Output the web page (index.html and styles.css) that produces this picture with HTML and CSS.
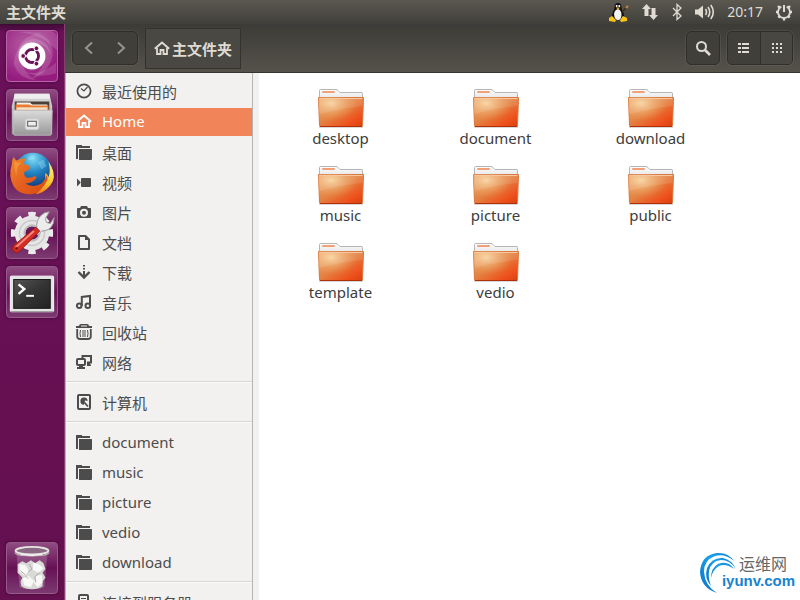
FILE: index.html
```html
<!DOCTYPE html>
<html lang="zh-CN">
<head>
    <meta charset="UTF-8">
    <meta name="viewport" content="width=device-width, initial-scale=1.0">
    <title>主文件夹</title>
    <link rel="stylesheet" href="styles.css">
</head>
<body>
    <!-- Shared icons -->
    <svg class="sprite" aria-hidden="true">
        <defs>
            <linearGradient id="paper" x1="0" y1="0" x2="0" y2="1">
                <stop offset="0" stop-color="#fdfdfd"/>
                <stop offset="1" stop-color="#dedede"/>
            </linearGradient>
            <linearGradient id="orange" x1="0" y1="0" x2="1" y2="1">
                <stop offset="0" stop-color="#eda66a"/>
                <stop offset="0.45" stop-color="#e38444"/>
                <stop offset="0.8" stop-color="#ee4f1b"/>
                <stop offset="1" stop-color="#d4410f"/>
            </linearGradient>
            <radialGradient id="shine" cx="0.28" cy="0.2" r="0.6">
                <stop offset="0" stop-color="#f8dba6" stop-opacity="0.9"/>
                <stop offset="1" stop-color="#f0a060" stop-opacity="0"/>
            </radialGradient>
            <linearGradient id="metal" x1="0" y1="0" x2="0" y2="1">
                <stop offset="0" stop-color="#dcdcdc"/>
                <stop offset="1" stop-color="#979797"/>
            </linearGradient>
            <linearGradient id="screen" x1="0" y1="0" x2="1" y2="1">
                <stop offset="0" stop-color="#555"/>
                <stop offset="0.5" stop-color="#343434"/>
                <stop offset="1" stop-color="#222"/>
            </linearGradient>
            <radialGradient id="globe" cx="0.5" cy="0.15" r="0.8">
                <stop offset="0" stop-color="#7fdcf5"/>
                <stop offset="0.45" stop-color="#2386c4"/>
                <stop offset="1" stop-color="#0f2f72"/>
            </radialGradient>
            <linearGradient id="fox" x1="0" y1="0" x2="1" y2="1">
                <stop offset="0" stop-color="#f08a2c"/>
                <stop offset="0.5" stop-color="#e4601e"/>
                <stop offset="1" stop-color="#d84a12"/>
            </linearGradient>
            <linearGradient id="flame" x1="0" y1="0" x2="0" y2="1">
                <stop offset="0" stop-color="#fff27a"/>
                <stop offset="0.6" stop-color="#f9c22e"/>
                <stop offset="1" stop-color="#ee7a1c"/>
            </linearGradient>
            <linearGradient id="swoosh" x1="0" y1="1" x2="1" y2="0">
                <stop offset="0" stop-color="#0a72c4"/>
                <stop offset="0.6" stop-color="#1aa0ea"/>
                <stop offset="1" stop-color="#0f84d8"/>
            </linearGradient>
        </defs>

        <symbol id="i-folder-big" viewBox="0 0 48 40">
            <path d="M2 39h44" stroke="#000" stroke-opacity="0.15" stroke-width="2"/>
            <path d="M2.500 14V2.500Q2.500 1.500 3.500 1.500H19Q20 1.500 21 2.500L23 4.500H45Q45.500 4.500 45.500 5.500V14z" fill="url(#paper)" stroke="#b5b5b5"/>
            <rect x="5" y="3" width="13" height="2" rx="1" fill="#f2a078"/>
            <path d="M1.500 9.500h45l-1 28q0 1-1 1h-41q-1 0-1-1z" fill="url(#orange)" stroke="#d9773c"/>
            <path d="M1.500 9.500h45l-1 28q0 1-1 1h-41q-1 0-1-1z" fill="url(#shine)"/>
            <path d="M2 10h44l-.3 8Q24 20 2.500 26z" fill="#fff" fill-opacity="0.1"/>
            <path d="M2.500 10.500h43" stroke="#f6c7a0"/>
            <path d="M3 38.500h42" stroke="#b02e08"/>
        </symbol>

        <symbol id="i-clock" viewBox="0 0 16 16">
            <circle cx="8" cy="8" r="6.600" fill="none" stroke="currentColor" stroke-width="1.800"/>
            <path d="M5 5.500l3 2.500 3.500-4" fill="none" stroke="currentColor" stroke-width="1.200"/>
        </symbol>
        <symbol id="i-home" viewBox="0 0 16 16">
            <path d="M.8 8.800L8 2.500l7.200 6.300" fill="none" stroke="currentColor" stroke-width="2"/>
            <path d="M3 8v6h3.500v-4h3v4H13V8" fill="none" stroke="currentColor" stroke-width="1.800"/>
        </symbol>
        <symbol id="i-folder" viewBox="0 0 16 16">
            <path d="M0 1h6v1h8v2H2v11H0z" fill="currentColor"/>
            <path d="M3 5h12.500q.5 0 .5.500V15q0 1-1 1H3z" fill="currentColor"/>
        </symbol>
        <symbol id="i-video" viewBox="0 0 16 16">
            <rect x="5" y="4" width="10" height="9" rx="1" fill="currentColor"/>
            <path d="M1 4.500L4.500 8v1L1 12.500z" fill="currentColor"/>
        </symbol>
        <symbol id="i-camera" viewBox="0 0 16 16">
            <path fill-rule="evenodd" d="M5 2h6l1 2h2q1 0 1 1v8q0 1-1 1H2q-1 0-1-1V5q0-1 1-1h2zM8 4.800a4 4 0 1 0 0 8 4 4 0 0 0 0-8zm0 2a2 2 0 1 1 0 4 2 2 0 0 1 0-4z" fill="currentColor"/>
        </symbol>
        <symbol id="i-doc" viewBox="0 0 16 16">
            <path d="M3 2h6.500L13 5.500V15H3z" fill="none" stroke="currentColor" stroke-width="2" stroke-linejoin="round"/>
            <path d="M9 1v5h5" fill="currentColor"/>
        </symbol>
        <symbol id="i-down" viewBox="0 0 16 16">
            <path d="M7 1h2v1.500H7zM7 4h2v1.500H7zM7 7h2v6H7z" fill="currentColor"/>
            <path d="M2.500 8L8 13.500 13.500 8" fill="none" stroke="currentColor" stroke-width="2.400"/>
        </symbol>
        <symbol id="i-music" viewBox="0 0 16 16">
            <circle cx="3.200" cy="11.800" r="2.300" fill="none" stroke="currentColor" stroke-width="2"/>
            <circle cx="11.800" cy="11.800" r="2.300" fill="none" stroke="currentColor" stroke-width="2"/>
            <path d="M5.800 12V3l8.200-1v10" fill="none" stroke="currentColor" stroke-width="2"/>
        </symbol>
        <symbol id="i-trash" viewBox="0 0 16 16">
            <path d="M0 2h3q0-2 2-2h6q2 0 2 2h3v2H0zM5 1.500V2.500h6V1.500z" fill="currentColor"/>
            <path d="M1.200 5v7.500q0 2.500 3 2.500h7.600q3 0 3-2.500V5" fill="none" stroke="currentColor" stroke-width="1.800"/>
            <path d="M4.500 6q-1 3.500 0 7M7 6v7M9 6v7M11.500 6q1 3.500 0 7" fill="none" stroke="currentColor"/>
        </symbol>
        <symbol id="i-network" viewBox="0 0 16 16">
            <rect x="1" y="5" width="8" height="6" rx="1" fill="none" stroke="currentColor" stroke-width="2"/>
            <path d="M3 11h4v2h2v2H1v-2h2z" fill="currentColor"/>
            <path d="M6.500 4V2H15v6.500h-4" fill="none" stroke="currentColor" stroke-width="2"/>
            <path d="M11 9h3v1.500h1V12h-4z" fill="currentColor"/>
        </symbol>
        <symbol id="i-disk" viewBox="0 0 16 16">
            <rect x="2" y="1" width="12" height="14" rx="1" fill="none" stroke="currentColor" stroke-width="2"/>
            <path d="M8 10.800A3.600 3.600 0 1 1 11.600 7L9 6.500 8 8z" fill="currentColor"/>
            <path d="M7.500 7.500l4.500 5" stroke="currentColor" stroke-width="1.800"/>
        </symbol>
        <symbol id="i-server" viewBox="0 0 16 16">
            <rect x="3" y="1" width="9" height="14" rx="1" fill="none" stroke="currentColor" stroke-width="2"/>
            <path d="M5 4.500h5M5 7.500h5" stroke="currentColor"/>
        </symbol>
    </svg>

    <header class="panel">
        <span class="panel-title">主文件夹</span>
        <div class="indicators">
            <button class="indicator" aria-label="输入法">
                <svg width="20" height="20" viewBox="0 0 20 20">
                    <path d="M9 1q3.500 0 3.500 4 0 3 2 6 1.500 4-1 7H5q-3-3-1.500-7 2-3 2-6Q5.500 1 9 1z" fill="#111"/>
                    <path d="M9 7q3 1 3.500 5 0 6-3.500 6t-4-6q.5-4 4-5z" fill="#f4f4f4"/>
                    <circle cx="7.700" cy="4" r="1" fill="#fff"/>
                    <circle cx="10.300" cy="4" r="1" fill="#fff"/>
                    <path d="M7 5.500h4L9 7.800z" fill="#f5a60a"/>
                    <path d="M0 16l3-2 4 4-1 2-6-1zM18 16l-4-2-3 4 1 2 6-1z" fill="#fcc419"/>
                    <path d="M13 10l5-5" stroke="#3a2a1a" stroke-width="1.500"/>
                    <path d="M17 6l2-2" stroke="#c78846" stroke-width="2"/>
                </svg>
            </button>
            <button class="indicator" aria-label="网络">
                <svg width="18" height="18" viewBox="0 0 18 18" fill="currentColor">
                    <path d="M5.500 1L10 6H7.500v7h-4V6H1zM12.500 17L8 12h2.500V5h4v7H17z"/>
                </svg>
            </button>
            <button class="indicator" aria-label="蓝牙">
                <svg width="12" height="18" viewBox="0 0 12 18" fill="none" stroke="currentColor" stroke-width="1.300">
                    <path d="M2 5l8 8-4 3.500v-15L10 5l-8 8"/>
                </svg>
            </button>
            <button class="indicator" aria-label="音量">
                <svg width="20" height="18" viewBox="0 0 20 18" fill="none" stroke="currentColor" stroke-width="1.600">
                    <path d="M0 6.500h3L8 2.500v13l-5-4H0z" fill="currentColor" stroke="none"/>
                    <path d="M10.500 6q2 3 0 6M13 4q3.500 5 0 10M15.800 2q5 7 0 14"/>
                </svg>
            </button>
            <time class="clock">20:17</time>
            <button class="indicator" aria-label="系统">
                <svg width="18" height="18" viewBox="0 0 18 18" fill="none" stroke="currentColor">
                    <path d="M6.300 3.600A6 6 0 1 0 11.700 3.600" stroke-width="1.800"/>
                    <path d="M9 2v7" stroke-width="2"/>
                    <path d="M9 15v2.500M1 9h2M15 9h2M3.300 14.700l1.500-1.500M14.700 14.700l-1.500-1.500M3 3l1.800 1.800M15 3l-1.800 1.800" stroke-width="2.400"/>
                </svg>
            </button>
        </div>
    </header>

    <div class="desktop">
        <nav class="launcher" aria-label="启动器">
            <button class="tile tile-dash" aria-label="搜索">
                <svg viewBox="0 0 52 52">
                    <g fill="#fff" fill-opacity="0.14">
                        <path d="M11 28Q10 8 32 2 52 10 46 31 40 46 25 50 40 38 39 26 37 10 22 14 12 18 11 28z"/>
                        <path d="M7 34Q9 12 28 8 44 10 45 25 42 14 30 13 15 16 16 35 20 46 30 51 12 50 7 34z"/>
                        <path d="M12 1Q30 3 40 10L52 20V5Q50 0 44 0zM18 42Q34 48 51 33V44Q34 50 18 42z"/>
                    </g>
                    <circle cx="26" cy="26" r="14" fill="#fff"/>
                    <circle cx="26" cy="26" r="6.800" fill="none" stroke="#6b1459" stroke-width="3"/>
                    <path d="M26 26H15M26 26l5.500-9.500M26 26l5.500 9.500" stroke="#fff" stroke-width="1.500"/>
                    <circle cx="26" cy="26" r="5" fill="#fff"/>
                    <g fill="#6b1459" stroke="#fff">
                        <circle cx="16.800" cy="26" r="2.500"/>
                        <circle cx="30.600" cy="18" r="2.500"/>
                        <circle cx="30.600" cy="34" r="2.500"/>
                    </g>
                </svg>
            </button>
            <button class="tile" aria-label="文件">
                <svg viewBox="0 0 52 52">
                    <path d="M8 4h36l3 13v29H5V17z" fill="url(#metal)"/>
                    <path d="M8 4h36l1 5H7z" fill="#eee"/>
                    <path d="M8 12h36v12H8z" fill="#4a4038"/>
                    <path d="M10 13h14l2 2h16v8H10z" fill="#f4f0e8"/>
                    <path d="M9 15h14l2 1h18v7H9z" fill="#e97a31"/>
                    <path d="M10 18h32v3H10z" fill="#f7e0c4"/>
                    <path d="M6 21h41l-1 25q0 1-1 1H8q-1 0-1-1z" fill="url(#metal)" stroke="#b9b9b9"/>
                    <rect x="19" y="30" width="14" height="11" rx="2" fill="#e4e4e4" stroke="#ccc"/>
                    <rect x="21.500" y="32.500" width="9" height="5" fill="#eee" stroke="#555"/>
                </svg>
            </button>
            <button class="tile" aria-label="Firefox">
                <svg viewBox="0 0 52 52">
                    <circle cx="27" cy="24" r="20" fill="url(#globe)"/>
                    <path d="M22 8q4-3 8-1l-3 4-5 1zM32 14l6-3 3 7-5 3z" fill="#b4eefa" fill-opacity="0.3"/>
                    <path d="M43 13Q51 24 46 34 42 44 30 47 41 37 40 25q3 2 3 5 3-7 0-17z" fill="url(#flame)"/>
                    <path d="M7 8q1 3 3 4 4-3 10-2-3 3-2 6 5 0 6 3-1 3-6 5-1 4 3 6 5 0 8-2 3 1 0 4-5 4-10 4 8 5 17 0 4-4 5-9 3 4-1 11-6 9-15 9Q13 48 7 39 1 28 5 16q0-5 2-8z" fill="url(#fox)"/>
                    <path d="M44 27q3-5 2-9 6 12-1 20-7 8-15 9 11-9 14-20z" fill="url(#flame)"/>
                    <path d="M8 13q3 2 7 1-6 5-5 14-3-8-2-15z" fill="#f9b04c" fill-opacity="0.5"/>
                </svg>
            </button>
            <button class="tile" aria-label="系统设置">
                <svg viewBox="0 0 52 52">
                    <circle cx="26" cy="26" r="19" fill="none" stroke="#ebebeb" stroke-width="6" pathLength="16" stroke-dasharray="1 1" stroke-dashoffset="0.5"/>
                    <circle cx="26" cy="26" r="12.500" fill="none" stroke="#e6e6e6" stroke-width="11"/>
                    <circle cx="26" cy="26" r="13" fill="none" stroke="#c9c9c9" stroke-width="1.500"/>
                    <circle cx="26" cy="26" r="8" fill="none" stroke="#bdbdbd" stroke-width="2"/>
                    <path d="M31 22q-1-9 4-14 4-4 9-4l-4 7 1 4 4 1 4-6q0 7-4 11-4 3-9 3l-4 4-4-3z" fill="#ececec" stroke="#999"/>
                    <path d="M30 20l4 4-21 21q-3 3-6 0t0-6z" fill="#d52d24" stroke="#9b1712"/>
                    <path d="M28 24L9 41" stroke="#f28a7d" stroke-width="2"/>
                    <circle cx="10" cy="42" r="1.500" fill="#7d1511"/>
                </svg>
            </button>
            <button class="tile" aria-label="终端">
                <svg viewBox="0 0 52 52">
                    <rect x="3.500" y="9.500" width="45" height="37" rx="1" fill="#e4e4e4" stroke="#fafafa"/>
                    <path d="M4 46.500h44" stroke="#8d8d8d"/>
                    <rect x="7" y="13" width="38" height="30" fill="url(#screen)" stroke="#161616"/>
                    <path d="M12 18l6 5-6 5" fill="none" stroke="#fff" stroke-width="2.500"/>
                    <path d="M20 30h8" stroke="#fff" stroke-width="2"/>
                </svg>
            </button>
            <button class="tile tile-trash" aria-label="回收站">
                <svg viewBox="0 0 52 52">
                    <path d="M10 12l3 33q1 3 13 3t13-3l3-33z" fill="#fff" fill-opacity="0.18"/>
                    <path d="M11 22l5-3 4 2 5-3 4 3 5-3 4 3 2 6-3 4 3 5-3 4v5q-4 3-11 3t-11-3l-1-5 2-4-5-5z" fill="#d9d9d5"/>
                    <path d="M13 22l6 1 4 6-5 5-5-4zM27 20l6 2 5 4-5 5-6-3zM16 37l6-3 6 5-3 7-7-2zM30 34l6-1 1 8-5 5-4-5z" fill="#f8f8f6"/>
                    <path d="M23 22l3 5-4 3M34 31l-5 4 1 6M19 34l3 3M14 29l5 4" stroke="#a9a9a3" fill="none"/>
                    <ellipse cx="26" cy="8" rx="17" ry="4" fill="#8a6a84" stroke="#e6e6e2" stroke-width="2"/>
                    <path d="M8 8q0 5 18 5t18-5v2q0 4-18 4T8 10z" fill="#c6c6c0"/>
                    <path d="M14 12q12 2 23 0" stroke="#fff" fill="none"/>
                </svg>
            </button>
        </nav>

        <main class="window">
            <div class="toolbar">
                <div class="button-group">
                    <button class="tool" aria-label="后退"><svg class="dim" width="16" height="16" viewBox="0 0 16 16"><path d="M11 2.500L5 8l6 5.500" fill="none" stroke="currentColor" stroke-width="2"/></svg></button>
                    <button class="tool" aria-label="前进"><svg class="dim" width="16" height="16" viewBox="0 0 16 16"><path d="M5 2.500L11 8l-6 5.500" fill="none" stroke="currentColor" stroke-width="2"/></svg></button>
                </div>
                <button class="path-button"><svg width="16" height="16"><use href="#i-home"/></svg>主文件夹</button>
                <div class="button-group search">
                    <button class="tool" aria-label="搜索"><svg width="16" height="16" viewBox="0 0 16 16" fill="none" stroke="currentColor"><circle cx="6.500" cy="6.500" r="4.500" stroke-width="2"/><path d="M10 10l5 5" stroke-width="2.600"/></svg></button>
                </div>
                <div class="button-group">
                    <button class="tool" aria-label="列表视图"><svg width="16" height="16" viewBox="0 0 16 16" fill="currentColor"><path d="M2 3h3v2H2zM6 3h7v2H6zM2 7h3v2H2zM6 7h7v2H6zM2 11h3v2H2zM6 11h7v2H6z"/></svg></button>
                    <button class="tool pressed" aria-label="图标视图"><svg width="16" height="16" viewBox="0 0 16 16" fill="currentColor"><path d="M3 3h2v2H3zM7 3h2v2H7zM11 3h2v2h-2zM3 7h2v2H3zM7 7h2v2H7zM11 7h2v2h-2zM3 11h2v2H3zM7 11h2v2H7zM11 11h2v2h-2z"/></svg></button>
                </div>
            </div>

            <div class="content">
                <aside class="sidebar">
                    <a class="place" href="#"><svg><use href="#i-clock"/></svg>最近使用的</a>
                    <a class="place active" href="#"><svg><use href="#i-home"/></svg>Home</a>
                    <a class="place" href="#"><svg><use href="#i-folder"/></svg>桌面</a>
                    <a class="place" href="#"><svg><use href="#i-video"/></svg>视频</a>
                    <a class="place" href="#"><svg><use href="#i-camera"/></svg>图片</a>
                    <a class="place" href="#"><svg><use href="#i-doc"/></svg>文档</a>
                    <a class="place" href="#"><svg><use href="#i-down"/></svg>下载</a>
                    <a class="place" href="#"><svg><use href="#i-music"/></svg>音乐</a>
                    <a class="place" href="#"><svg><use href="#i-trash"/></svg>回收站</a>
                    <a class="place" href="#"><svg><use href="#i-network"/></svg>网络</a>
                    <hr>
                    <a class="place" href="#"><svg><use href="#i-disk"/></svg>计算机</a>
                    <hr>
                    <a class="place" href="#"><svg><use href="#i-folder"/></svg>document</a>
                    <a class="place" href="#"><svg><use href="#i-folder"/></svg>music</a>
                    <a class="place" href="#"><svg><use href="#i-folder"/></svg>picture</a>
                    <a class="place" href="#"><svg><use href="#i-folder"/></svg>vedio</a>
                    <a class="place" href="#"><svg><use href="#i-folder"/></svg>download</a>
                    <hr>
                    <a class="place" href="#"><svg><use href="#i-server"/></svg>连接到服务器</a>
                </aside>

                <section class="files">
                    <a class="file" href="#"><svg><use href="#i-folder-big"/></svg>desktop</a>
                    <a class="file" href="#"><svg><use href="#i-folder-big"/></svg>document</a>
                    <a class="file" href="#"><svg><use href="#i-folder-big"/></svg>download</a>
                    <a class="file" href="#"><svg><use href="#i-folder-big"/></svg>music</a>
                    <a class="file" href="#"><svg><use href="#i-folder-big"/></svg>picture</a>
                    <a class="file" href="#"><svg><use href="#i-folder-big"/></svg>public</a>
                    <a class="file" href="#"><svg><use href="#i-folder-big"/></svg>template</a>
                    <a class="file" href="#"><svg><use href="#i-folder-big"/></svg>vedio</a>
                </section>
            </div>
        </main>
    </div>

    <div class="watermark">
        <svg width="40" height="42" viewBox="0 0 40 42" fill="url(#swoosh)">
            <path d="M18 41Q2 36 1 20 2 3 18 1q11-1 17 8Q26 1 16 4 5 8 5 20q1 14 13 21z"/>
            <path d="M12 34Q5 26 8 16q5-11 16-10 9 2 13 11Q31 8 22 8 12 9 10 19q-1 8 2 15z"/>
            <path d="M12 26q0-10 7-14 10-4 16 5-8-6-15-3-6 3-8 12z"/>
        </svg>
        <div class="watermark-text">
            <span class="watermark-name">运维网</span>
            <span class="watermark-site">iyunv.com</span>
        </div>
    </div>
</body>
</html>
```
FILE: styles.css
```css
* {
    box-sizing: border-box;
}

body {
    margin: 0;
    height: 100vh;
    display: flex;
    flex-direction: column;
    overflow: hidden;
    font-family: "Noto Sans", "Noto Sans CJK SC", sans-serif;
    font-size: 15px;
    color: #4c4c4c;
}

button {
    font: inherit;
    color: inherit;
    background: none;
    border: none;
    padding: 0;
    cursor: pointer;
}

a {
    color: inherit;
    text-decoration: none;
}

svg {
    display: block;
    flex-shrink: 0;
}

.sprite {
    position: absolute;
    width: 0;
    height: 0;
}

/* Top panel */
.panel {
    display: flex;
    justify-content: space-between;
    align-items: center;
    height: 24px;
    flex-shrink: 0;
    padding: 0 7px 0 6px;
    background: linear-gradient(#5b5850, #403f3a);
    color: #dfdbd2;
}

.panel-title {
    font-weight: bold;
    line-height: 24px;
}

.indicators {
    display: flex;
    align-items: center;
    gap: 12px;
}

.clock {
    font-size: 14px;
    line-height: 22px;
}

/* Launcher */
.desktop {
    flex: 1;
    min-height: 0;
    display: flex;
}

.launcher {
    width: 65px;
    flex-shrink: 0;
    display: flex;
    flex-direction: column;
    gap: 7px;
    padding: 6px;
    background: linear-gradient(#3d0b34, #6a1059 8px, #64104f);
    border-right: 1px solid #84406f;
}

.tile {
    width: 52px;
    height: 52px;
    border: 1px solid #96598a;
    border-radius: 4px;
    background: linear-gradient(#8f4c82, #661054 50%, #7c3a71);
    box-shadow: 0 0 3px rgba(40, 0, 35, 0.6);
}

.tile svg {
    width: 50px;
    height: 50px;
}

.tile-dash {
    border-color: #b765a8;
    background: radial-gradient(circle at 40% 30%, #b65ea3, #951c7e 75%);
}

.tile-trash {
    margin-top: auto;
}

/* Window */
.window {
    flex: 1;
    min-width: 0;
    display: flex;
    flex-direction: column;
}

.toolbar {
    display: flex;
    align-items: center;
    height: 49px;
    flex-shrink: 0;
    gap: 7px;
    padding: 0 7px;
    background: linear-gradient(#3c3b37, #55524a);
    border-bottom: 1px solid #35342f;
    color: #dfdbd2;
}

.button-group {
    display: flex;
    height: 34px;
    border: 1px solid #2f2e2a;
    border-radius: 5px;
    background: #403f3a;
    box-shadow: 0 0 0 1px rgba(255, 255, 255, 0.06);
    overflow: hidden;
}

.tool {
    width: 32px;
    display: flex;
    align-items: center;
    justify-content: center;
}

.dim {
    color: #96948c;
}

.pressed {
    background: #494741;
    border-left: 1px solid #302f2b;
}

.path-button {
    display: flex;
    align-items: center;
    gap: 2px;
    height: 41px;
    padding: 0 8px;
    border: 1px solid #33322e;
    background: #494842;
    font-weight: bold;
}

.search {
    margin-left: auto;
}

.content {
    flex: 1;
    min-height: 0;
    display: flex;
    background: #fff;
}

/* Sidebar */
.sidebar {
    width: 188px;
    flex-shrink: 0;
    padding-top: 4px;
    background: #f2f1f0;
    border: solid #b8b5b0;
    border-width: 0 1px;
    overflow: hidden;
}

.place {
    display: flex;
    align-items: center;
    gap: 10px;
    height: 30px;
    padding: 0 10px 2px;
    white-space: nowrap;
}

.place svg {
    width: 16px;
    height: 16px;
}

.place.active {
    height: 28px;
    margin: 1px 0 2px;
    background: #f18458;
    color: #fff;
}

.sidebar hr {
    height: 2px;
    margin: 3px 0 5px;
    border: none;
    border-top: 1px solid #d8d6d3;
    background: #fbfbfb;
}

/* Files */
.files {
    flex: 1;
    display: grid;
    grid-template-columns: repeat(auto-fill, 155px);
    grid-auto-rows: 77px;
    align-content: start;
    padding: 15px 0 0 4px;
    border-left: 6px solid #f2f1f0;
    color: #3c3c3c;
}

.file {
    display: flex;
    flex-direction: column;
    align-items: center;
    line-height: 20px;
}

.file svg {
    width: 48px;
    height: 40px;
}

/* Site mark over the window corner */
.watermark {
    position: absolute;
    right: 5px;
    bottom: 6px;
    display: flex;
    align-items: center;
}

.watermark-text {
    display: flex;
    flex-direction: column;
    margin-left: -17px;
}

.watermark-name {
    padding-left: 17px;
    font-family: "Noto Sans CJK SC", sans-serif;
    font-size: 16px;
    line-height: 16px;
    color: #666;
}

.watermark-site {
    font-family: "Liberation Sans", sans-serif;
    font-size: 15px;
    line-height: 20px;
    font-weight: bold;
    color: #1583d2;
}
```
